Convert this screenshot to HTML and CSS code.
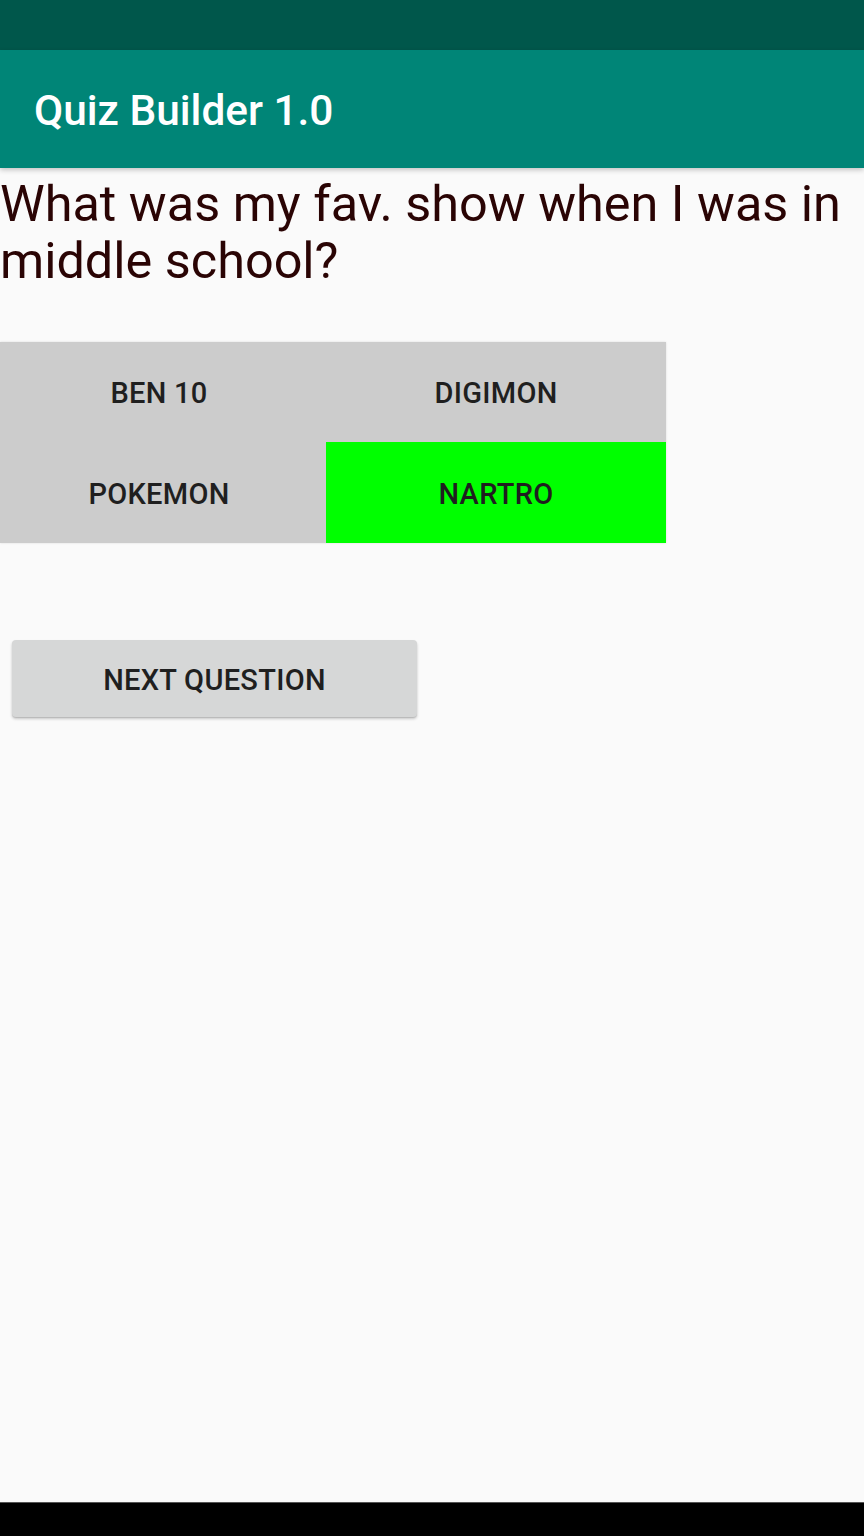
FILE: index.html
```html
<!DOCTYPE html>
<html>
<head>
<meta charset="utf-8">
<link rel="stylesheet" href="styles.css">
</head>
<body>
<div class="screen">
  <div class="status-bar"></div>
  <header class="app-bar"><h1 class="title">Quiz Builder 1.0</h1></header>
  <main class="content">
    <p class="question">What was my fav. show when I was in middle school?</p>
    <div class="answers">
      <button class="answer left">BEN 10</button>
      <button class="answer">DIGIMON</button>
      <button class="answer left">POKEMON</button>
      <button class="answer correct">NARTRO</button>
    </div>
    <button class="next">NEXT QUESTION</button>
  </main>
  <div class="nav-bar"></div>
</div>
</body>
</html>
```
FILE: styles.css
```css
* { box-sizing: border-box; }
html, body { margin: 0; padding: 0; }
body { background: #fafafa; font-family: Roboto, "Noto Sans", sans-serif; }
.screen { width: 864px; height: 1536px; display: flex; flex-direction: column; background: #fafafa; }
.status-bar { height: 50px; background: #00574b; flex: none; }
.app-bar {
  height: 118px; background: #008577; flex: none; display: flex; align-items: center;
  padding: 2px 0 0 34px; position: relative; z-index: 1;
  box-shadow: 0 2px 5px rgba(0,0,0,0.22);
}
.title { margin: 0; color: #fff; font-size: 42.4px; font-weight: 500; letter-spacing: 0; }
.content { flex: 1; display: flex; flex-direction: column; align-items: flex-start; }
.question {
  margin: 0; padding: 7px 0 0 0; font-size: 50.4px; line-height: 57px; color: #2a0404;
  font-weight: 400;
}
.answers {
  margin-top: 53px; display: grid; grid-template-columns: 326px 340px; grid-template-rows: 100px 101px;
  box-shadow: 0 0 2px rgba(0,0,0,0.12);
}
.answer {
  border: none; margin: 0; padding: 2px 0 0 0; background: #cccccc; font-family: Roboto, sans-serif;
  font-size: 29px; font-weight: 500; color: #1f1f1f; letter-spacing: 0.3px;
}
.answer.left { padding-right: 8px; }
.answer.correct { background: #00ff00; }
.next {
  margin: 97px 0 0 12px; width: 405px; height: 77px; border: none; border-radius: 4px;
  background: #d6d7d7; font-family: Roboto, sans-serif; font-size: 29px; font-weight: 500;
  color: #1f1f1f; letter-spacing: 0.3px; padding: 2px 0 0 0;
  box-shadow: 0 2px 3px rgba(0,0,0,0.2), 0 1px 1px rgba(0,0,0,0.1);
}
.nav-bar { height: 34px; background: #000; flex: none; border-top: 1px solid #555; }
```
